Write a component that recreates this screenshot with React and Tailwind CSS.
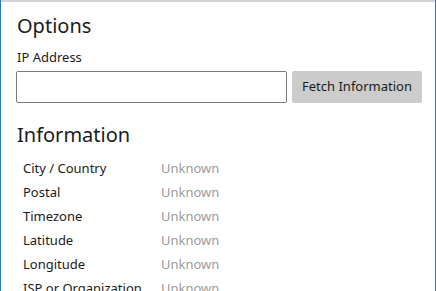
import React, { useState } from 'react';

const rows = ['City / Country', 'Postal', 'Timezone', 'Latitude', 'Longitude', 'ISP or Organization'];

const App = () => {
  const [ip, setIp] = useState('');

  return (
    <div className="w-[436px] h-[291px] overflow-hidden bg-white border-x border-[#2a7bc6] font-['Noto_Sans',sans-serif] text-[#1b1b1b]">
      <div className="h-[2px] bg-[#d2d2d8]"></div>
      <div className="pl-[15px] pr-[13px]">
        <h1 className="mt-[10px] pl-[1px] text-[20px] leading-[28px]">Options</h1>
        <label className="block mt-[8px] pl-[1px] text-[13px] leading-[18px]">IP Address</label>
        <div className="flex mt-[5px] gap-[5px]">
          <input
            value={ip}
            onChange={(e) => setIp(e.target.value)}
            className="w-[271px] h-[32px] px-2 border border-[#7a7a7a] rounded-[2px] outline-none text-[13px]"
          />
          <button className="h-[32px] flex-1 bg-[#cccccc] rounded-[2px] text-[13px]">Fetch Information</button>
        </div>
        <h2 className="mt-[18px] pl-[1px] text-[20px] leading-[28px]">Information</h2>
        <div className="mt-[8px] pl-[7px]">
          {rows.map((label) => (
            <div key={label} className="flex h-[24px] items-center text-[13px]">
              <span className="w-[138px]">{label}</span>
              <span className="text-[#9a9a9a]">Unknown</span>
            </div>
          ))}
        </div>
      </div>
    </div>
  );
};

export default App;
